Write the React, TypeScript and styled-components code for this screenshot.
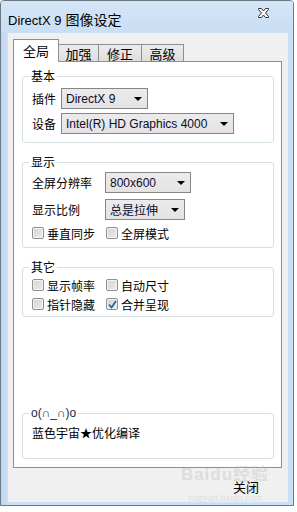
import React from 'react';
import styled, { createGlobalStyle } from 'styled-components';

const CJK = '"Noto Sans CJK SC", "Liberation Sans", sans-serif';
const LATIN = '"Liberation Sans", "Noto Sans CJK SC", sans-serif';

const GlobalStyle = createGlobalStyle`
  html, body {
    margin: 0;
    padding: 0;
    background: #ffffff;
  }
  * {
    box-sizing: border-box;
  }
`;

const Window = styled.div`
  position: relative;
  width: 294px;
  height: 506px;
  border: 1px solid #6d7885;
  border-radius: 4px 4px 0 0;
  background: linear-gradient(to right, #bfd5ee 0px, #cbe0f6 6px, #cbe0f6 100%);
  display: flex;
  flex-direction: column;
  overflow: hidden;
`;

const TitleBar = styled.div`
  height: 32px;
  flex-shrink: 0;
  display: flex;
  align-items: center;
  justify-content: space-between;
  padding: 3px 24px 0 7px;
  background: linear-gradient(#d4e6f8, #c9def4);
`;

const Title = styled.div`
  font-family: ${CJK};
  font-size: 14px;
  color: #000;
  display: flex;
  align-items: baseline;
  gap: 4px;
`;

const TitleLatin = styled.span`
  font-family: ${LATIN};
  font-size: 13px;
`;

const CloseGlyph = styled.svg`
  align-self: flex-start;
  margin-top: 4px;
`;

const Client = styled.div`
  flex: 1;
  margin: 0 5px 3px 7px;
  background: #f0f0f0;
  display: flex;
  flex-direction: column;
  padding: 6px 6px 0 5px;
`;

const TabRow = styled.div`
  display: flex;
  align-items: flex-end;
  height: 22px;
  position: relative;
  z-index: 1;
`;

const Tab = styled.div<{ $active?: boolean; $w: number }>`
  width: ${p => p.$w}px;
  font-family: ${CJK};
  font-size: 13px;
  line-height: 1;
  display: flex;
  align-items: center;
  justify-content: center;
  border: 1px solid #8b8e95;
  border-bottom: none;
  color: #000;
  ${p =>
    p.$active
      ? `
    height: 23px;
    background: #ffffff;
    margin-bottom: -1px;
    padding-bottom: 2px;
  `
      : `
    height: 17px;
    margin-left: -1px;
    background: linear-gradient(#ececec, #dedede);
    padding-top: 1px;
  `}
`;

const Panel = styled.div`
  height: 407px;
  border: 1px solid #8b8e95;
  background: #ffffff;
  display: flex;
  flex-direction: column;
  padding: 14px 7px 8px 8px;
`;

const Group = styled.div<{ $pt: number; $pb: number; $gap?: number; $mt?: string }>`
  position: relative;
  border: 1px solid #d5dfe6;
  border-radius: 3px;
  padding: ${p => p.$pt}px 8px ${p => p.$pb}px 9px;
  display: flex;
  flex-direction: column;
  gap: ${p => p.$gap ?? 0}px;
  margin-top: ${p => p.$mt ?? '0'};
`;

const Legend = styled.span<{ $latin?: boolean }>`
  position: absolute;
  top: -9px;
  left: 6px;
  padding: 0 2px;
  background: #ffffff;
  font-family: ${p => (p.$latin ? LATIN : CJK)};
  font-size: 12px;
  line-height: 16px;
  color: ${p => (p.$latin ? '#1b1f4f' : '#000')};
`;

const Row = styled.div<{ $h: number }>`
  height: ${p => p.$h}px;
  display: flex;
  align-items: center;
`;

const Label = styled.span<{ $w: number }>`
  width: ${p => p.$w}px;
  flex-shrink: 0;
  font-family: ${CJK};
  font-size: 12px;
  color: #000;
`;

const Text = styled.span`
  font-family: ${CJK};
  font-size: 12px;
  color: #000;
`;

const Select = styled.div<{ $w: number; $cjk?: boolean }>`
  position: relative;
  width: ${p => p.$w}px;
  height: 21px;
  border: 1px solid #868686;
  background: linear-gradient(#ebebeb, #e3e3e3);
  padding-left: 4px;
  display: flex;
  align-items: center;
  font-family: ${p => (p.$cjk ? CJK : LATIN)};
  font-size: 12px;
  color: #0c0c2c;
  &::after {
    content: '';
    position: absolute;
    right: 5px;
    top: 8px;
    border-left: 4px solid transparent;
    border-right: 4px solid transparent;
    border-top: 4px solid #000;
  }
`;

const CheckItem = styled.label<{ $w?: number }>`
  display: flex;
  align-items: center;
  gap: 3px;
  width: ${p => (p.$w ? `${p.$w}px` : 'auto')};
  flex-shrink: 0;
`;

const Box = styled.span`
  width: 12px;
  height: 12px;
  border: 1px solid #8f8f8f;
  border-radius: 2px;
  background: linear-gradient(135deg, #d3d3d3, #ececec);
  box-shadow: inset 0 0 0 1px #f4f4f4;
  display: flex;
  align-items: center;
  justify-content: center;
`;

const Footer = styled.div`
  flex: 1;
  display: flex;
  align-items: center;
  justify-content: flex-end;
  padding: 2px 23px 0 0;
  position: relative;
`;

const CloseButton = styled.button`
  border: none;
  background: transparent;
  font-family: ${CJK};
  font-size: 13px;
  color: #000;
  padding: 0;
  position: relative;
  z-index: 1;
`;

const Watermark = styled.div`
  position: absolute;
  right: 11px;
  top: -2px;
  width: 92px;
  display: flex;
  flex-direction: column;
  align-items: center;
  gap: 9px;
  color: rgba(190, 190, 190, 0.4);
  pointer-events: none;
`;

const WatermarkBrand = styled.span`
  font-family: ${LATIN};
  font-weight: bold;
  font-size: 17px;
  line-height: 18px;
  letter-spacing: 1px;
  white-space: nowrap;
`;

const WatermarkUrl = styled.span`
  font-family: "Liberation Serif", serif;
  font-size: 10px;
  line-height: 10px;
  white-space: nowrap;
`;

const Check = ({ checked, label, w }: { checked?: boolean; label: string; w?: number }) => (
  <CheckItem $w={w}>
    <Box>
      {checked && (
        <svg width="9" height="9" viewBox="0 0 9 9">
          <path d="M1 4.5 L3.5 7.5 L8 1" fill="none" stroke="#1f6e9a" strokeWidth="1.8" />
        </svg>
      )}
    </Box>
    <Text>{label}</Text>
  </CheckItem>
);

export default function App() {
  return (
    <>
      <GlobalStyle />
      <Window>
        <TitleBar>
          <Title>
            <TitleLatin>DirectX 9</TitleLatin>
            <span>图像设定</span>
          </Title>
          <CloseGlyph width="11" height="10" viewBox="0 0 11 10">
            <path
              d="M0.5 0.5 H3.5 L5.5 3 L7.5 0.5 H10.5 V1.5 L7.5 5 L10.5 8.5 V9.5 H7.5 L5.5 7 L3.5 9.5 H0.5 V8.5 L3.5 5 L0.5 1.5 Z"
              fill="#ffffff"
              stroke="#2d3138"
              strokeWidth="1"
            />
          </CloseGlyph>
        </TitleBar>
        <Client>
          <TabRow>
            <Tab $active $w={46}>全局</Tab>
            <Tab $w={41}>加强</Tab>
            <Tab $w={44}>修正</Tab>
            <Tab $w={43}>高级</Tab>
          </TabRow>
          <Panel>
            <Group $pt={11} $pb={8} $gap={4}>
              <Legend>基本</Legend>
              <Row $h={21}>
                <Label $w={29}>插件</Label>
                <Select $w={87}>DirectX 9</Select>
              </Row>
              <Row $h={21}>
                <Label $w={29}>设备</Label>
                <Select $w={173}>Intel(R) HD Graphics 4000</Select>
              </Row>
            </Group>
            <Group $pt={9} $pb={7} $gap={6} $mt="19px">
              <Legend>显示</Legend>
              <Row $h={21}>
                <Label $w={73}>全屏分辨率</Label>
                <Select $w={86}>800x600</Select>
              </Row>
              <Row $h={21}>
                <Label $w={73}>显示比例</Label>
                <Select $w={80} $cjk>总是拉伸</Select>
              </Row>
              <Row $h={14}>
                <Check label="垂直同步" w={74} />
                <Check label="全屏模式" />
              </Row>
            </Group>
            <Group $pt={9} $pb={4} $gap={3} $mt="19px">
              <Legend>其它</Legend>
              <Row $h={16}>
                <Check label="显示帧率" w={74} />
                <Check label="自动尺寸" />
              </Row>
              <Row $h={16}>
                <Check label="指针隐藏" w={74} />
                <Check label="合并呈现" checked />
              </Row>
            </Group>
            <Group $pt={10} $pb={18} $mt="auto">
              <Legend $latin>o(∩_∩)o</Legend>
              <Row $h={16}>
                <Text>蓝色宇宙★优化编译</Text>
              </Row>
            </Group>
          </Panel>
          <Footer>
            <Watermark>
              <WatermarkBrand>Baidu经验</WatermarkBrand>
              <WatermarkUrl>jingyan.baidu.com</WatermarkUrl>
            </Watermark>
            <CloseButton>关闭</CloseButton>
          </Footer>
        </Client>
      </Window>
    </>
  );
}
